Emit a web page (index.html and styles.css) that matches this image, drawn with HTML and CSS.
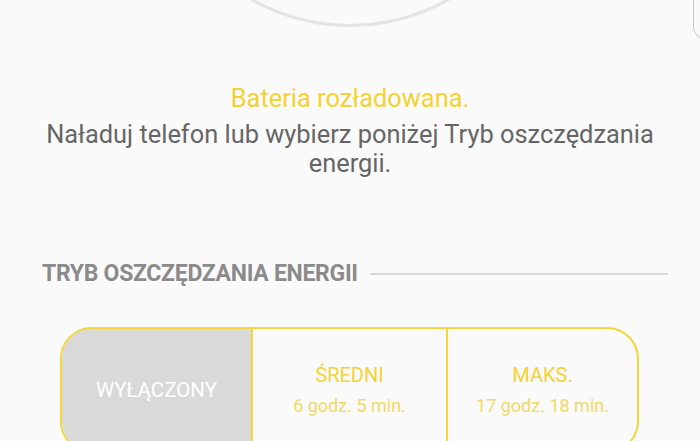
FILE: index.html
```html
<!DOCTYPE html>
<html lang="pl">
<head>
<meta charset="utf-8">
<title>Tryb oszczędzania energii</title>
<link rel="stylesheet" href="styles.css">
</head>
<body>
<div class="screen">
  <div class="gauge"></div>
  <div class="edge"></div>
  <p class="alert">Bateria rozładowana.</p>
  <p class="message">Naładuj telefon lub wybierz poniżej Tryb oszczędzania energii.</p>
  <div class="section-head">
    <h2 class="section-title">TRYB OSZCZĘDZANIA ENERGII</h2>
    <div class="section-rule"></div>
  </div>
  <div class="modes">
    <div class="mode mode-off">
      <span class="mode-name">WYŁĄCZONY</span>
    </div>
    <div class="mode mode-mid">
      <span class="mode-name">ŚREDNI</span>
      <span class="mode-time">6 godz. 5 min.</span>
    </div>
    <div class="mode mode-max">
      <span class="mode-name">MAKS.</span>
      <span class="mode-time">17 godz. 18 min.</span>
    </div>
  </div>
</div>
</body>
</html>
```
FILE: styles.css
```css
html, body {
  margin: 0;
  padding: 0;
  overflow: hidden;
  background: #fafafa;
}
body {
  font-family: Roboto, "Noto Sans", "Liberation Sans", sans-serif;
  width: 700px;
  height: 441px;
}
.screen {
  position: relative;
  width: 700px;
  height: 441px;
  overflow: hidden;
  display: flex;
  flex-direction: column;
}
.gauge {
  flex: none;
  width: 396px;
  height: 396px;
  border: 3px solid #e4e4e4;
  border-radius: 50%;
  margin: -375px auto 0;
}
.edge {
  position: absolute;
  left: 693px;
  top: -10px;
  width: 20px;
  height: 50px;
  border-left: 1px solid #c8c8c8;
  border-bottom: 1px solid #c8c8c8;
  border-bottom-left-radius: 14px;
  box-sizing: border-box;
}
.alert {
  margin: 56px 0 0;
  text-align: center;
  font-size: 25.4px;
  line-height: 30px;
  color: #f3d232;
}
.message {
  margin: 7px 0 0;
  padding: 0 40px;
  text-align: center;
  font-size: 25.4px;
  line-height: 29px;
  color: #666666;
}
.section-head {
  margin: 82px 0 0;
  padding: 0 32px 0 42px;
  display: flex;
  align-items: center;
  gap: 12px;
}
.section-title {
  margin: 0;
  font-size: 23px;
  line-height: 28px;
  font-weight: 700;
  letter-spacing: -0.3px;
  color: #8b8b8b;
  white-space: nowrap;
}
.section-rule {
  flex: 1;
  height: 2px;
  background: #d7d7d7;
}
.modes {
  margin: 39px 0 0 60px;
  width: 579px;
  height: 126px;
  flex: none;
  box-sizing: border-box;
  border: 2px solid #f4d53b;
  border-radius: 32px;
  overflow: hidden;
  display: grid;
  grid-template-columns: 189px 197px 189px;
}
.mode {
  display: flex;
  flex-direction: column;
  align-items: center;
  justify-content: center;
  box-sizing: border-box;
}
.mode-off {
  background: #d9d9d9;
}
.mode-off .mode-name {
  color: #ffffff;
  font-size: 20.5px;
  line-height: 26px;
}
.mode-mid {
  border-left: 2px solid #f4d53b;
  border-right: 2px solid #f4d53b;
}
.mode-name {
  font-size: 20px;
  line-height: 26px;
  color: #f3d232;
}
.mode-time {
  margin-top: 5.6px;
  font-size: 18px;
  line-height: 24px;
  color: #f2d864;
}
```
